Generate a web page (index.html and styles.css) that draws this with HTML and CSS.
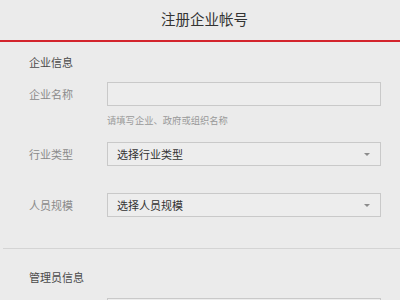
FILE: index.html
```html
<!DOCTYPE html>
<html lang="zh-CN">
<head>
<meta charset="utf-8">
<link rel="stylesheet" href="styles.css">
</head>
<body>
<div class="header">注册企业帐号</div>
<div class="section">
  <div class="section-title">企业信息</div>
  <div class="row row-first">
    <div class="label">企业名称</div>
    <div class="field">
      <div class="input"></div>
    </div>
  </div>
  <div class="hint">请填写企业、政府或组织名称</div>
  <div class="row row-second">
    <div class="label">行业类型</div>
    <div class="field">
      <div class="select"><span>选择行业类型</span><i class="arrow"></i></div>
    </div>
  </div>
  <div class="row row-third">
    <div class="label">人员规模</div>
    <div class="field">
      <div class="select"><span>选择人员规模</span><i class="arrow"></i></div>
    </div>
  </div>
</div>
<div class="divider"></div>
<div class="section">
  <div class="section-title admin-title">管理员信息</div>
  <div class="row row-admin">
    <div class="label"></div>
    <div class="field">
      <div class="input"></div>
    </div>
  </div>
</div>
</body>
</html>
```

FILE: styles.css
```css
html, body {
  margin: 0;
  padding: 0;
  background: #ebebeb;
  font-family: "Noto Sans CJK SC", "Noto Sans", sans-serif;
  overflow: hidden;
  height: 300px;
}
.header {
  height: 40px;
  line-height: 38px;
  text-align: center;
  padding-left: 9px;
  font-size: 14.5px;
  color: #333;
  border-bottom: 2px solid #d3242c;
}
.section {
  padding: 0 19px 0 29px;
}
.section-title {
  padding-top: 12px;
  font-size: 11px;
  line-height: 16px;
  color: #4a4a4a;
}
.row {
  display: flex;
  align-items: center;
}
.row-first { margin-top: 12px; }
.row-second { margin-top: 15px; }
.row-third { margin-top: 27px; }
.row-admin { margin-top: 13px; }
.label {
  width: 78px;
  flex: none;
  font-size: 11px;
  color: #8a8a8a;
}
.field {
  flex: 1;
}
.input, .select {
  height: 22px;
  border: 1px solid #c9c9c9;
  background: #ededed;
  box-sizing: content-box;
}
.select {
  display: flex;
  align-items: center;
  justify-content: space-between;
  padding: 0 10px 0 9px;
  font-size: 11px;
  color: #333;
}
.arrow {
  width: 0;
  height: 0;
  border-left: 3px solid transparent;
  border-right: 3px solid transparent;
  border-top: 3px solid #8c8c8c;
}
.hint {
  margin: 7px 0 0 78px;
  font-size: 9.3px;
  line-height: 14px;
  color: #999;
}
.divider {
  margin: 31px 0 0 3px;
  height: 1px;
  background: #d4d4d4;
}
.admin-title {
  padding-top: 20px;
}
```
